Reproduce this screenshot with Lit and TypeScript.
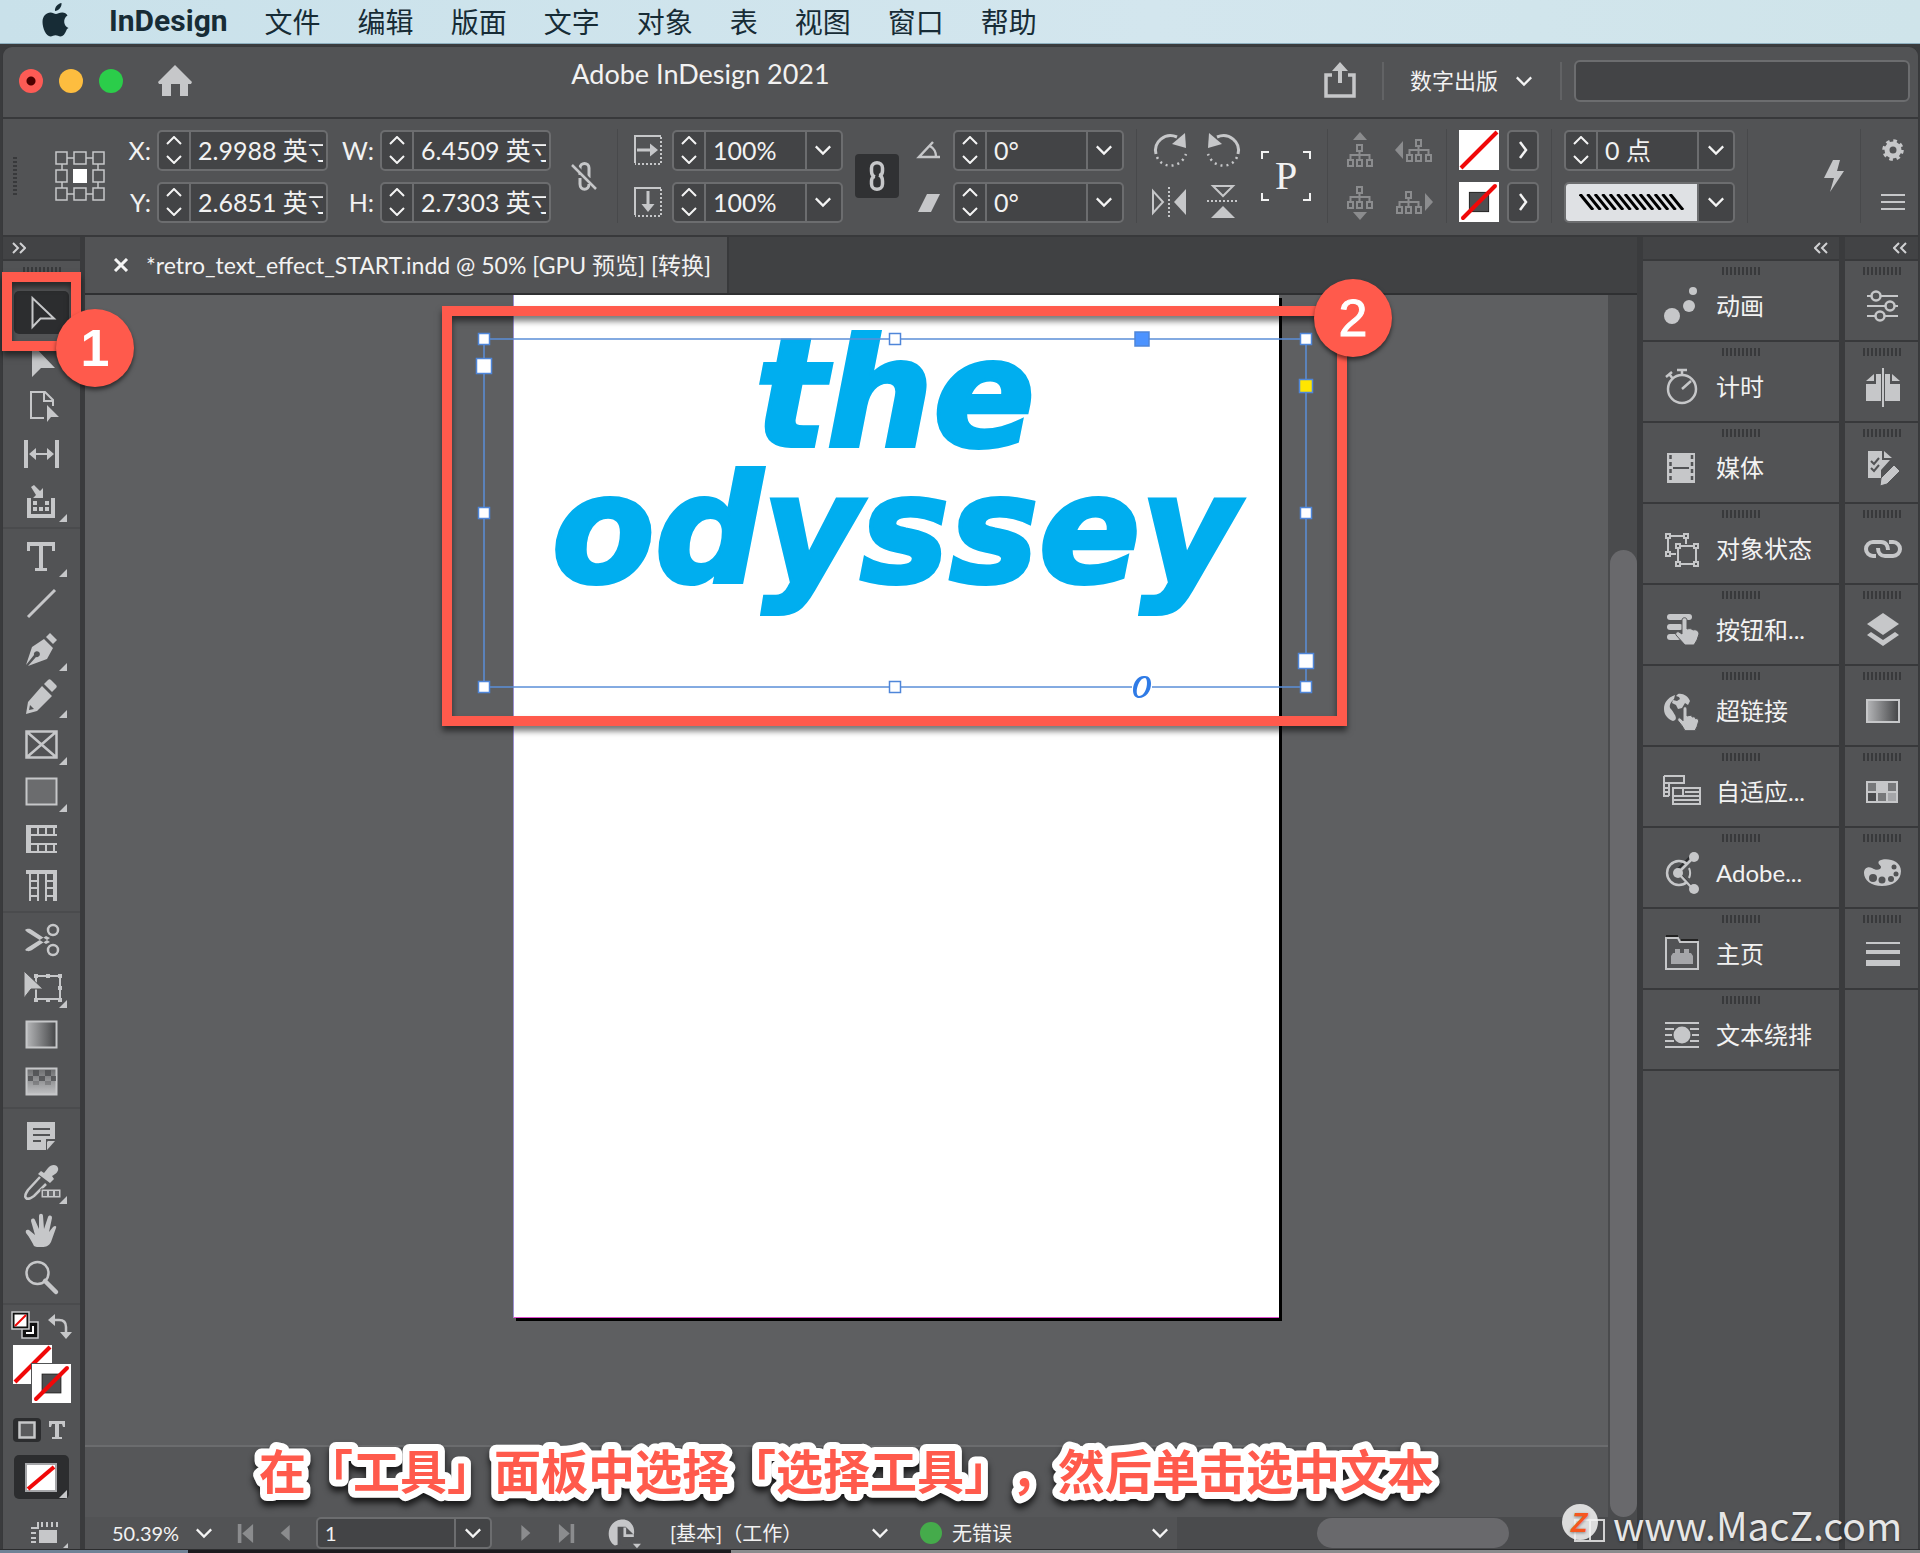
import { LitElement, html, svg, css, nothing } from "lit";
import { customElement } from "lit/decorators.js";
import { classMap } from "lit/directives/class-map.js";

const corner = svg`<path d="M38 41h8v-8z"/>`;

const none = (x: number, y: number, w: number) => svg`
  <rect x=${x} y=${y} width=${w} height=${w} fill="#fff"/>
  <path d="M${x + 2} ${y + w - 2}L${x + w - 2} ${y + 2}" stroke="#f00808" stroke-width="4"/>`;

const hollow = (x: number, y: number, w: number) => svg`
  <rect x=${x} y=${y} width=${w} height=${w} fill="#fff"/>
  <rect x=${x + w * 0.26} y=${y + w * 0.26} width=${w * 0.48} height=${w * 0.48} fill="#4e4f51" stroke="#222" stroke-width="1"/>
  <path d="M${x + 4} ${y + w - 4}L${x + w - 4} ${y + 4}" stroke="#f00808" stroke-width="4" stroke-linecap="round"/>`;

const tree = svg`<g fill="none" stroke="currentColor" stroke-width="2">
  <rect x="17" y="11" width="5" height="6"/><rect x="8" y="26" width="5" height="6"/>
  <rect x="17" y="26" width="5" height="6"/><rect x="27" y="26" width="5" height="6"/>
  <path d="M19.500 17v9M10.500 26v-5h19v5"/></g>`;

const hand = svg`<path d="M22 18c0-3 4-3 4 0v7l2-.500c2-.500 3 .500 3 1.500 2-.700 3.500.500 3.500 1.700 2-.500 3.500.500 3 3l-1.500 5-2 4H24l-3-5-4-5c-1-2 1-4 3-2l2 2z" stroke="#525355" stroke-width="1"/>`;

const icons: Record<string, unknown> = {
  select: svg`<path d="M11.500 5v29l8-8.500H33z" fill="none" stroke="currentColor" stroke-width="2"/>`,
  direct: svg`<path d="M11 4v33l9-9h14z"/>`,
  page: svg`<path d="M23 31H10V5h14l8 8v6M23 6v8h9" fill="none" stroke="currentColor" stroke-width="2"/><path d="M26 18v17l4-5h8z"/>`,
  gap: svg`<path d="M3 6h4v28H3zM34 6h4v28h-4z"/><path d="M8 20l7-6v5h11v-5l7 6-7 6v-5H15v5z"/>`,
  collect: svg`<path d="M6 17h4v16h20V17h4v20H6z"/><path d="M10 6l3-2 6 6 3-3v10H12l3-3z"/><path d="M12 20h4v4h-4zM24 20h4v4h-4zM12 26h4v4h-4zM18 26h4v4h-4zM24 26h4v4h-4z"/>${corner}`,
  type: svg`<path d="M6 6h28v9h-3v-5h-9v22h4v3H14v-3h4V10H9v5H6z"/>${corner}`,
  line: svg`<path d="M7 34L34 7" stroke="currentColor" stroke-width="3"/>`,
  pen: svg`<path d="M23 9l9 9-6 11-19 7 8-9a3 3 0 1 0-2-2l-8 10 6-18z"/><path d="M25 7l4-4 7 7-4 4z"/>${corner}`,
  pencil: svg`<path d="M21 9l10 10-15 15-11 3 2-12zM8 33l5-1-4-4z" fill-rule="evenodd"/><path d="M23 7l4-4c1-1 2-1 3 0l5 5c1 1 1 2 0 3l-4 4z"/>${corner}`,
  frame: svg`<path d="M5.500 7.500h30v26h-30zL35.500 33.500M35.500 7.500l-30 26" fill="none" stroke="currentColor" stroke-width="2.500"/>${corner}`,
  rect: svg`<rect x="5.500" y="7.500" width="30" height="26" fill="#6b6c6e" stroke="currentColor" stroke-width="2"/>${corner}`,
  rows: svg`<path d="M5 7h31v3H10v6h26v2H10v7h26v2H10v6h26v2H5z"/><path d="M16 9h2v8h-2zM24 9h2v8h-2zM32 9h2v8h-2zM16 26h2v8h-2zM24 26h2v8h-2zM32 26h2v8h-2z"/>`,
  cols: svg`<path d="M5 5h31v31h-4V9h-6v27h-2V9h-6v27h-2V9H10v27H8V9H5z"/><path d="M9 15h8v2H9zM9 22h8v2H9zM9 30h8v2H9zM25 15h8v2h-8zM25 22h8v2h-8zM25 30h8v2h-8z"/>`,
  cut: svg`<path d="M4 10c3-2 5-1 7 0l18 12-4 2L6 12zM4 30c3 2 5 1 7 0l18-12-4-2L6 28z"/><g fill="none" stroke="currentColor" stroke-width="2.500"><circle cx="32" cy="10" r="5"/><circle cx="32" cy="30" r="5"/></g>`,
  transform: svg`<path d="M15 9h24v23H15z" fill="none" stroke="currentColor" stroke-width="2"/><path d="M13 7h4v4h-4zM25 7h4v4h-4zM37 7h4v4h-4zM37 19h4v4h-4zM37 31h4v4h-4zM25 31h4v4h-4zM13 31h4v4h-4z"/><path d="M3 4v27l7-9h12z" stroke="#525355" stroke-width="1"/>${corner}`,
  gradient: svg`<rect x="5.500" y="7.500" width="30" height="26" fill="url(#gh)" stroke="currentColor" stroke-width="2"/>`,
  feather: svg`<rect x="5.500" y="7.500" width="30" height="26" fill="url(#gv)" stroke="currentColor" stroke-width="2"/><path d="M12 9h6v6h-6zM24 9h6v6h-6zM7 15h5v5H7zM18 15h6v5h-6zM30 15h5v5h-5z" fill="#4c4d50" opacity=".8"/><path d="M12 20h6v4h-6zM24 20h6v4h-6z" fill="#4c4d50" opacity=".35"/>`,
  note: svg`<path d="M6 6h28v17h-9v11H6z"/><path d="M27 25h7l-8 9v-8z"/><path d="M12 13h17M12 19h17M12 25h8" stroke="#525355" stroke-width="2"/>`,
  dropper: svg`<path d="M19 14L7 27c-2 3-4 6-2 8s5 0 8-2l12-12" fill="none" stroke="currentColor" stroke-width="2.500"/><path d="M17 11l3-3 3 2 4-5c3-4 9-4 10 0 1 3-2 6-6 8l2 3-4 4z"/><path d="M20 26h20v9H20z" stroke="#525355" stroke-width="1"/><path d="M22 28h4v5h-4zM28 28h4v5h-4zM34 28h4v5h-4z" fill="#66676a"/>${corner}`,
  hand: svg`<path d="M13 36c-2-4-4-8-8-13-1-3 1-4 3-3l6 5-4-14c0-3 3-3 4-1l4 9V6c0-3 4-3 4 0l1 13 4-12c1-2 4-2 4 1l-3 14 4-5c2-2 4-1 3 1l-5 14c-2 4-5 5-9 5s-7 0-8-1z"/>`,
  zoom: svg`<circle cx="16.500" cy="16" r="11" fill="none" stroke="currentColor" stroke-width="2.500"/><path d="M24 24l11 11" stroke="currentColor" stroke-width="4.500" stroke-linecap="round"/>`,
  anim: svg`<circle cx="11" cy="30" r="8"/><circle cx="28" cy="20" r="6"/><circle cx="32" cy="5" r="4"/>`,
  timing: svg`<g fill="none" stroke="currentColor" stroke-width="2.500"><circle cx="21" cy="22" r="14"/><path d="M21 22l9-8M16 3h10M21 3v5M5 10l6-5M9 8l3 4"/></g>`,
  media: svg`<path d="M6 5h28v30H6z"/><path d="M9.500 7v28M31 7v28" stroke="#525355" stroke-width="2.500" stroke-dasharray="4 3"/><path d="M12 20h16" stroke="#525355" stroke-width="2"/>`,
  states: svg`<g fill="none" stroke="currentColor" stroke-width="2"><path d="M5 5h4v4H5zM23 5h4v4h-4zM5 23h4v4H5zM9 7h14M7 9v14M25 9v6M9 25h6"/><path d="M15 15h4v4h-4zM33 15h4v4h-4zM15 33h4v4h-4zM33 33h4v4h-4zM19 17h14M17 19v14M35 19v14M19 35h14"/></g>`,
  buttons: svg`<rect x="6" y="4" width="25" height="6" rx="3"/><rect x="6" y="14" width="16" height="6" rx="3"/><rect x="6" y="24" width="14" height="6" rx="3"/><path d="M21 10c0-3 5-3 5 0v9c3-1 5 0 6 1 3-1 6 1 6 4l-2 6-3 5H24l-9-10c-1-2 1-4 3-3l3 2z" stroke="#525355"/>`,
  links: svg`<path d="M14 4C6 7 3 12 3 18c0 6 4 10 9 12 4-1 3-4 2-6-2-3-2-4-5-7-1-4 2-7 4-9zM17 3c5-1 10 2 12 7l-2 4-3-2-3 5-4 1-2-4-4-2 1-3 4 1 3-2-1-2-3-1z"/>${hand}`,
  adaptive: svg`<g fill="none" stroke="currentColor" stroke-width="2"><path d="M3 4h20v8M3 4v20h5M3 11h20M3 16h5M3 20h5M8 12v12"/><path d="M12 16h27v16H12zM12 24h27M12 28h27M22 16v8M24 20h14"/></g>`,
  share: svg`<path d="M16 17L31 2M16 18l15 16" stroke="#2a2b2d" stroke-width="2"/><g fill="none" stroke="currentColor" stroke-width="2.500"><path d="M26 11a12 12 0 1 0 0 18"/><path d="M28 15a12 12 0 0 1 0 10" stroke-width="2"/><path d="M17 20L32 5M17 20l15 16"/></g><circle cx="17" cy="20" r="5"/><circle cx="33" cy="4" r="5"/><circle cx="33" cy="36" r="5"/>`,
  home: svg`<path d="M5 4h12l2 4h18v27H5z" fill="none" stroke="currentColor" stroke-width="2"/><path d="M5 2h12M20 6h17" stroke="#222" stroke-width="2"/><path d="M10 22l2-3h2v-4h5v4h4v-4h5v4h2l2 3v8H10z" fill="#a5a6a9"/>`,
  wrap: svg`<path d="M4 7h34v2H4zM4 31h34v2H4zM4 13h9v2H4zM29 13h9v2h-9zM4 19h7v2H4zM31 19h7v2h-7zM4 25h9v2H4zM29 25h9v2h-9z"/><circle cx="21" cy="20" r="8.500"/>`,
  sliders: svg`<g fill="none" stroke="currentColor" stroke-width="2"><path d="M4 10h4M18 10h17M4 20h18M32 20h3M4 30h8M22 30h13"/><circle cx="13" cy="10" r="4.500" stroke-width="2.500"/><circle cx="27" cy="20" r="4.500" stroke-width="2.500"/><circle cx="17" cy="30" r="4.500" stroke-width="2.500"/></g>`,
  pages: svg`<path d="M3 17h10V7h5v27H3zM37 17H27V7h-5v27h15zM3 14l8-7v7zM37 14l-8-7v7z"/><path d="M20 1v39" stroke="currentColor" stroke-width="2"/>`,
  review: svg`<path d="M5 3h14v9h8l-9 10v8H5z"/><path d="M21 3l8 7h-8z"/><path d="M8 13l3 3 5-6M8 20l3 3 5-6" stroke="#525355" stroke-width="2" fill="none"/><path d="M31 17l6 6-13 13-7 2 1-8z" stroke="#525355"/>`,
  chain: svg`<g fill="none" stroke="currentColor" stroke-width="4"><path d="M13 27h-3a7 7 0 0 1 0-14h8c5 0 7 4 7 8"/><path d="M15 19c0 5 3 8 7 8h8a7 7 0 0 0 0-14h-4"/></g>`,
  layers: svg`<path d="M20 3l16 11-16 11L4 14z"/><path d="M8 22l12 8 12-8 4 3-16 11L4 25z"/>`,
  grad2: svg`<rect x="4" y="9" width="32" height="22" fill="url(#gh)" stroke="currentColor" stroke-width="2"/>`,
  swatches: svg`<path d="M3 9h32v22H3z"/><path d="M5 11h8v8H5zM25 11h8v8h-8zM15 21h8v8h-8z" fill="#77787a"/><path d="M5 21h8v8H5z" fill="#4a4b4d"/><path d="M25 21h8v8h-8z" fill="#a5a6a9"/>`,
  palette: svg`<path d="M16 8c5-4 22-2 22 10 0 9-8 15-19 15S1 27 1 20c0-5 4-7 8-5 4 3 9 2 9-1 0-2-4-3-2-6z"/><g fill="#525355"><circle cx="10" cy="25" r="4"/><circle cx="19" cy="27" r="3.500"/><circle cx="28" cy="26" r="3"/><circle cx="33" cy="21" r="2.500"/><circle cx="31" cy="14" r="2.500"/></g>`,
  stroke: svg`<path d="M3 8h34v2H3zM3 16h34v4H3zM3 26h34v6H3z"/>`,
  apple: svg`<path d="M31 28c-2 5-4 7.500-6.500 7.500-2 0-3-1.200-5-1.200s-3 1.200-5 1.200C10 35.500 6.500 27 6.500 21c0-6 4-9.500 8-9.500 2.200 0 4 1.500 5.500 1.500s3.500-1.700 6.500-1.500c2 .200 4 1 5 3-5 3-4 10.500 1 12.500zM25.500 2c.500 4-3 8-6.500 8-.500-4 3-7.500 6.500-8z"/>`,
  house: svg`<path d="M20 4l17 17-1 2h-3v12h-8V23h-9v12H7V23H4l-1-2z"/>`,
  upload: svg`<path d="M12 14H6v21h28V14h-6" fill="none" stroke="currentColor" stroke-width="3.500"/><path d="M20 1l8 9h-6v12h-4V10h-6z"/>`,
  ref: svg`<g fill="none" stroke="currentColor" stroke-width="1.500"><path d="M-4-4h11v12H-4zM14-4h12v12H14zM33-4h11v12H33zM-4 14h11v12H-4zM33 14h11v12H33zM-4 32h11v12H-4zM14 32h12v12H14zM33 32h11v12H33zM7 2h7M26 2h7M7 38h7M26 38h7M2 8v6M2 26v6M38 8v6M38 26v6"/></g><path d="M13 13h14v14H13z" fill="#fff"/>`,
  unlink: svg`<g fill="none" stroke="currentColor" stroke-width="3"><path d="M16 19v-7c0-6 9-6 9 0v10M16 22v6c0 7 9 7 9 0"/></g><path d="M10 8l24 24" stroke="#525355" stroke-width="3"/><path d="M8 9l24 24" stroke="currentColor" stroke-width="2.500"/>`,
  link: svg`<g fill="none" stroke="currentColor" stroke-width="3.500"><path d="M18 21c-3-1-3.500-3-3.500-6v-3c0-7 11-7 11 0v3c0 3-1 4-3 5"/><path d="M22 19c3 1 3.500 3 3.500 6v3c0 7-11 7-11 0v-3c0-3 1-4 3-5"/></g>`,
  scaleX: svg`<path d="M33 6H7v27" fill="none" stroke="currentColor" stroke-width="2"/><path d="M33 7v27H7" fill="none" stroke="currentColor" stroke-width="2" stroke-dasharray="2 2"/><path d="M9 18.500h13v-5l8 6.500-8 6.500v-5H9z"/>`,
  scaleY: svg`<path d="M33 6H7v27" fill="none" stroke="currentColor" stroke-width="2"/><path d="M33 7v27H7" fill="none" stroke="currentColor" stroke-width="2" stroke-dasharray="2 2"/><path d="M18.500 9h3v13h5L20 30l-6.500-8h5z"/>`,
  angle: svg`<path d="M24 12L10 27h21M21 16c5 3 6 6 6 11" fill="none" stroke="currentColor" stroke-width="2.500"/>`,
  shear: svg`<path d="M18 12h13l-9 18H9z"/>`,
  cw: svg`<path d="M5 24C2 12 14 2 26 7" fill="none" stroke="currentColor" stroke-width="3"/><path d="M34 3l1 15-14-4z"/><path d="M6 27c5 12 24 12 29-3" fill="none" stroke="currentColor" stroke-width="2.500" stroke-dasharray="2 4"/>`,
  ccw: svg`<path d="M35 24C38 12 26 2 14 7" fill="none" stroke="currentColor" stroke-width="3"/><path d="M6 3L5 18l14-4z"/><path d="M34 27C29 39 10 39 5 24" fill="none" stroke="currentColor" stroke-width="2.500" stroke-dasharray="2 4"/>`,
  flipH: svg`<path d="M35 7v26L23 20z"/><path d="M2 9v22l10-11z" fill="none" stroke="currentColor" stroke-width="2"/><path d="M18 5v31" stroke="currentColor" stroke-width="2" stroke-dasharray="2 2"/>`,
  flipV: svg`<path d="M8 36h24L20 24z"/><path d="M10 4h20L20 14z" fill="none" stroke="currentColor" stroke-width="2"/><path d="M4 19h32" stroke="currentColor" stroke-width="2" stroke-dasharray="2 2"/>`,
  treeUp: svg`<g transform="translate(0 4)">${tree}</g><path d="M13 10l7-8 7 8z"/>`,
  treeDown: svg`<g transform="translate(0 -6)">${tree}</g><path d="M13 30l7 8 7-8z"/>`,
  treeLeft: svg`<g transform="translate(5 -1)">${tree}</g><path d="M9 11L1 20l8 9z"/>`,
  treeRight: svg`<g transform="translate(-5 -1)">${tree}</g><path d="M31 11l8 9-8 9z"/>`,
  fillNone: svg`${none(0, 0, 40)}`,
  strokeNone: svg`${hollow(0, 0, 40)}`,
  bolt: svg`<path d="M20 4h7l-3 11h7L17 36l4-14h-10z"/>`,
  gear: svg`<circle cx="20" cy="20" r="6" fill="none" stroke="currentColor" stroke-width="5"/><circle cx="20" cy="20" r="9" fill="none" stroke="currentColor" stroke-width="3.500" stroke-dasharray="3.500 3.570"/>`,
  menu: svg`<path d="M8 12h24v2H8zM8 19h24v2H8zM8 26h24v2H8z"/>`,
  down: svg`<path d="M12 16l8 8 8-8" fill="none" stroke="currentColor" stroke-width="2.500"/>`,
  right: svg`<path d="M17 12l6 8-6 8" fill="none" stroke="currentColor" stroke-width="2.500"/>`,
  first: svg`<path d="M12 10h4v21h-4zM29 10v21l-12-10.500z"/>`,
  prev: svg`<path d="M23 11v18l-10-9z"/>`,
  next: svg`<path d="M16 11v18l10-9z"/>`,
  last: svg`<path d="M24 10h4v21h-4zM11 10v21l12-10.500z"/>`,
  pageview: svg`<path d="M11 34C0 27 2 7 18 5c10-1 16 8 14 17l-9-9H14v20z"/><path d="M17 33V15h6v9h8c0 5-4 9-8 10z" fill="#525355"/><path d="M22 14v9h10" fill="none" stroke="currentColor" stroke-width="3"/><path d="M31 32h9l-4.500 5z"/>`,
  defaults: svg`<path d="M19 19h16v16H19z" fill="#111" stroke="#c6c7c9" stroke-width="1.500"/><path d="M23 30h7v-7" fill="none" stroke="#fff" stroke-width="2"/><path d="M9 9h17v17H9z" fill="#111" stroke="#c6c7c9" stroke-width="1.500"/><path d="M11.500 11.500h12v12h-12z" fill="#fff"/><path d="M12 23l11-11" stroke="#f00808" stroke-width="2"/>`,
  swap: svg`<path d="M12 17h6q7 0 7 7v7" fill="none" stroke="currentColor" stroke-width="2.500"/><path d="M14 11v12l-7-6zM19 29h12l-6 7z"/>`,
  box: svg`<rect x="12.500" y="12.500" width="15" height="15" fill="#5a5b5d" stroke="currentColor" stroke-width="2.500"/>`,
  textT: svg`<path d="M12 11h16v6h-2l-1-3h-3v13h3v2h-10v-2h3V14h-3l-1 3h-2z"/>`,
  applyNone: svg`<rect x="5" y="7" width="30" height="27" fill="#fff" stroke="#a5a6a9" stroke-width="2"/><path d="M7 32L33 10" stroke="#f00808" stroke-width="4"/>${corner}`,
  screen: svg`<path d="M17 17h18v13H17z"/><path d="M16 9v6H9M20 9v5M25 9v5M30 9v5M35 9v5M9 20h5M9 25h5M9 29h5" fill="none" stroke="currentColor" stroke-width="2"/><path d="M41 35h5v-5z"/>`,
};

const icon = (name: string, cls = "") => html`<svg class="icon ${cls}" viewBox="0 0 40 40" aria-hidden="true">${icons[name]}</svg>`;

const menus = ["文件", "编辑", "版面", "文字", "对象", "表", "视图", "窗口", "帮助"];

const toolGroups = [
  [["select", "选择工具"], ["direct", "直接选择工具"], ["page", "页面工具"], ["gap", "间隙工具"], ["collect", "内容收集器工具"]],
  [["type", "文字工具"], ["line", "直线工具"], ["pen", "钢笔工具"], ["pencil", "铅笔工具"], ["frame", "矩形框架工具"], ["rect", "矩形工具"], ["rows", "水平网格工具"], ["cols", "垂直网格工具"]],
  [["cut", "剪刀工具"], ["transform", "自由变换工具"], ["gradient", "渐变色板工具"], ["feather", "渐变羽化工具"]],
  [["note", "附注工具"], ["dropper", "颜色主题工具"], ["hand", "抓手工具"], ["zoom", "缩放显示工具"]],
];

const panels = [
  ["anim", "动画"], ["timing", "计时"], ["media", "媒体"], ["states", "对象状态"], ["buttons", "按钮和..."],
  ["links", "超链接"], ["adaptive", "自适应..."], ["share", "Adobe..."], ["home", "主页"], ["wrap", "文本绕排"],
];

const railPanels = [
  ["sliders", "属性"], ["pages", "页面"], ["review", "审阅"], ["chain", "链接"], ["layers", "图层"],
  ["grad2", "渐变"], ["swatches", "色板"], ["palette", "颜色"], ["stroke", "描边"],
];

const handles: [number, number, number, string][] = [
  [10, 10, 11, "#fff"], [421, 10, 11, "#fff"], [832, 10, 11, "#fff"], [10, 184, 11, "#fff"], [832, 184, 11, "#fff"],
  [10, 358, 11, "#fff"], [421, 358, 11, "#fff"], [832, 358, 11, "#fff"],
  [10, 37, 15, "#fff"], [832, 332, 15, "#fff"], [668, 10, 14, "#4c93ff"], [832, 57, 13, "#ffe600"],
];

@customElement("app-root")
export class AppRoot extends LitElement {
  static styles = css`
    :host { display: flex; flex-direction: column; min-height: 100vh; position: relative; overflow: hidden; background: #3a3b3d; color: #f2f2f2; font: 25px/32px Lato, "Noto Sans CJK SC", sans-serif; }
    *, *::before, *::after { box-sizing: border-box; }
    button, input, select { font: inherit; color: inherit; background: none; border: 0; padding: 0; margin: 0; border-radius: 0; min-width: 0; appearance: none; }
    button { display: grid; place-items: center; place-content: center; }
    .icon { display: block; width: 40px; height: 40px; fill: currentColor; color: #c6c7c9; overflow: visible; flex: none; }
    .white { color: #f4f4f4; }
    .dim { color: #8b8c8e; }
    .defs { position: absolute; width: 0; height: 0; }

    .menubar { display: flex; align-items: center; gap: 37px; height: 44px; padding: 0 36px 2px; background: linear-gradient(90deg, #c9e1ea, #d3e6ee 60%, #cfe4ea); border-bottom: 1px solid #8fb0c0; color: #172c36; font: 28px/40px "Noto Sans CJK SC", sans-serif; }
    .menubar a { color: inherit; text-decoration: none; white-space: nowrap; }
    .menubar .brand { font: bold 30px/40px Roboto, sans-serif; }
    .menubar .icon { color: #172c36; margin-right: -4px; }

    .window { flex: 1; display: flex; flex-direction: column; margin: 2px 1px 0 2px; background: #525355; border: 1px solid #38393b; border-bottom: 0; border-radius: 10px 10px 0 0; }
    .titlebar { display: flex; align-items: center; height: 72px; padding: 0 8px 2px 16px; border-bottom: 2px solid #38393b; }
    .lights { display: flex; gap: 16px; }
    .light { width: 24px; height: 24px; border-radius: 50%; }
    .red { background: radial-gradient(circle, #4d0000 4px, #fd5b55 5px); }
    .amber { background: #fdbd3f; }
    .green { background: #2bcd4a; }
    .house { margin: 0 32px; }
    .appname { flex: 1; text-align: center; font-size: 27px; line-height: 32px; padding-bottom: 14px; padding-right: 146px; font-weight: 400; margin: 0; }
    .titletools { display: flex; align-items: center; gap: 12px; height: 44px; }
    .vline { width: 2px; height: 38px; background: #626365; }
    .pick { display: inline-grid; grid-template-columns: 1fr 36px; align-items: center; flex: none; }
    .pick select { grid-area: 1 / 1 / 2 / 3; width: 100%; outline-offset: 2px; }
    .pick .icon { grid-area: 1 / 2; pointer-events: none; }
    .upload { margin-right: 10px; }
    .workspace { width: 132px; margin: 0 6px 0 14px; font-size: 22px; }
    .search { width: 336px; height: 42px; background: #434446; border: 2px solid #6c6d6f; border-radius: 6px; padding: 0 10px; }

    .controls { display: flex; align-items: center; gap: 12px; height: 118px; padding: 0 13px 2px 10px; border-bottom: 2px solid #38393b; }
    .grip-v { width: 4px; height: 38px; margin-right: 26px; background: repeating-linear-gradient(#38393b 0 2px, transparent 2px 4px); }
    .refpoint { width: 50px; flex: none; }
    .pair { display: grid; row-gap: 11px; column-gap: 6px; align-items: center; flex: none; }
    .labelled { grid-template-columns: 34px 171px; }
    .labelled label { text-align: right; }
    .iconed { grid-template-columns: 36px 171px; }
    .iconed .icon { margin-left: -2px; }
    .quad { grid-template-columns: 44px 44px; column-gap: 8px; }
    .trees { grid-template-columns: 40px 40px; column-gap: 14px; }
    .pair > button { height: 41px; }
    .swatch { grid-template-columns: 40px 32px; column-gap: 8px; }
    .single { grid-template-columns: 171px; }
    .field { display: flex; height: 41px; background: #434446; border: 2px solid #6c6d6f; border-radius: 5px; overflow: hidden; }
    .field input { flex: 1; width: 0; padding: 0 3px 0 7px; }
    .steps { display: grid; width: 32px; border-right: 2px solid #6c6d6f; flex: none; }
    .steps button { overflow: hidden; }
    .steps svg { display: block; width: 16px; height: 9px; fill: none; stroke: #f4f4f4; stroke-width: 2; }
    .drop { width: 36px; border-left: 2px solid #6c6d6f; flex: none; }
    .field .icon, .pick .icon { color: #f4f4f4; width: 36px; height: 36px; }
    .rule { width: 1px; height: 94px; background: #48494b; flex: none; }
    .lock { width: 44px; height: 44px; border-radius: 4px; background: #303133; flex: none; }
    .unlink { width: 42px; flex: none; }
    .para { display: grid; place-items: center; width: 50px; height: 50px; margin: 0 4px; flex: none; font: 40px/46px "Liberation Serif", serif;
      background: linear-gradient(#f2f2f2 0 0) 0 0/8px 2px, linear-gradient(#f2f2f2 0 0) 0 0/2px 8px, linear-gradient(#f2f2f2 0 0) 100% 0/8px 2px, linear-gradient(#f2f2f2 0 0) 100% 0/2px 8px, linear-gradient(#f2f2f2 0 0) 0 100%/8px 2px, linear-gradient(#f2f2f2 0 0) 0 100%/2px 8px, linear-gradient(#f2f2f2 0 0) 100% 100%/8px 2px, linear-gradient(#f2f2f2 0 0) 100% 100%/2px 8px; background-repeat: no-repeat; }
    .arrow { width: 32px; background: #434446; border: 2px solid #6c6d6f; border-radius: 5px; }
    .hatch { flex: 1; display: grid; place-items: center; background: #dfe1e4; }
    .hatch svg { width: 106px; height: 16px; stroke: #000; stroke-width: 3; }
    .spacer { flex: 1; }
    .bolt { width: 30px; }
    .end { display: grid; gap: 12px; width: 40px; margin-right: -8px; justify-items: center; }

    .body { flex: 1; display: flex; background: #3a3b3d; }
    .side { display: flex; flex-direction: column; background: #525355; }
    .collapse { height: 24px; background: #424345; border-bottom: 2px solid #38393b; width: 100%; flex: none; }
    .collapse svg { width: 14px; height: 12px; fill: none; stroke: #d0d1d3; stroke-width: 2; }
    .tools { width: 77px; align-items: center; margin-right: 5px; flex: none; }
    .tools .collapse { justify-content: start; padding-left: 9px; }
    .grip { width: 38px; height: 8px; background: repeating-linear-gradient(90deg, #38393b 0 2px, transparent 2px 4px); }
    .tools .grip { margin: 6px 0 16px; height: 6px; }
    .group { display: grid; width: 100%; justify-items: center; padding-bottom: 3px; border-bottom: 2px solid #4a4b4d; margin-bottom: 3px; }
    .tool { width: 55px; height: 43px; margin: 2px 0; border-radius: 5px; }
    .tool .icon { margin-left: -1px; }
    .active { background: #2c2d2f; }
    .row { display: flex; justify-content: space-between; width: 68px; }
    .row button { width: 30px; height: 30px; }
    .proxies { width: 60px; height: 60px; margin: 6px 0 14px; display: block; }
    .modes { width: 58px; margin-bottom: 11px; }
    .row .small { width: 28px; height: 24px; border-radius: 4px; }
    .none { height: 44px; }
    .screen { width: 55px; height: 20px; margin-top: 22px; }

    .main { flex: 1; display: flex; flex-direction: column; min-width: 0; background: #5e5f61; }
    .tabs { height: 58px; background: #404143; border-bottom: 2px solid #2f3032; display: flex; }
    .tab { display: flex; align-items: center; gap: 15px; padding: 0 16px 0 26px; background: #525355; border-right: 2px solid #38393b; font-size: 23px; white-space: nowrap; }
    .close svg { width: 20px; height: 14px; stroke: #f4f4f4; stroke-width: 3; }
    .view { flex: 1; display: flex; min-height: 1120px; }
    .pasteboard { flex: 1; position: relative; min-width: 0; display: flex; flex-direction: column; justify-content: flex-end; }
    .under { height: 72px; background: #565759; border-top: 2px solid #6b6c6e; }
    .vtrack { width: 29px; background: #4a4b4d; padding: 255px 0 0 2px; display: flex; flex: none; }
    .vthumb { flex: 1; border-radius: 14px; background: #69696c; }
    .sheet { position: absolute; left: 428px; top: 0; width: 766px; height: 1023px; background: #fff; box-shadow: 3px 3px 0 #000; border-left: 1px solid #9a8fd0; border-bottom: 1px solid #e04bd0; }
    .textframe { position: absolute; left: 389px; top: 34px; width: 842px; }
    .textframe svg { display: block; width: 842px; height: 368px; overflow: visible; position: relative; }
    .headline { position: absolute; left: 10px; top: -3px; width: 822px; margin: 0; text-align: center; color: #00aeef; font: italic bold 150px/136px "DejaVu Sans", sans-serif; -webkit-text-stroke: 4px #00aeef; }
    .mark { position: absolute; border: 10px solid #ff5a4c; box-shadow: 0 5px 6px #0008, inset 0 5px 6px #0008; pointer-events: none; z-index: 2; }
    .badge { position: absolute; display: grid; place-items: center; width: 78px; height: 78px; border-radius: 50%; background: #ff5a4c; box-shadow: 0 3px 4px #0008; color: #fff; font: bold 52px/60px "Liberation Sans", sans-serif; z-index: 3; }
    .mark2 { left: 357px; top: 11px; width: 905px; height: 420px; }
    .badge2 { left: 1229px; top: -16px; font-weight: 400; -webkit-text-stroke: 1px #fff; }
    .mark1 { left: 2px; top: 272px; width: 79px; height: 79px; }
    .badge1 { left: 56px; top: 309px; }
    .caption { display: block; width: 100%; height: 70px; overflow: visible; position: relative; z-index: 2; filter: drop-shadow(0 5px 3px #000b); }
    .caption text { fill: #ff5a4c; stroke: #fff; stroke-width: 14px; stroke-linejoin: round; paint-order: stroke; text-anchor: middle; font: bold 47px/56px "Noto Sans CJK SC", sans-serif; text-spacing-trim: space-all; }

    .status { display: flex; align-items: center; height: 32px; background: #4a4b4d; font-size: 20px; }
    .statusbar { display: flex; align-items: center; background: #525355; height: 32px; width: 1092px; padding-left: 27px; flex: none; }
    .status .icon { width: 36px; height: 36px; }
    .zoomsel { width: 110px; margin-right: 2px; }
    .nav { width: 42px; height: 32px; flex: none; }
    .pageno { width: 176px; height: 32px; margin: 0 12px 0 8px; flex: none; }
    .pageview { width: 46px; height: 32px; margin: 0 24px 0 12px; flex: none; }
    .profile { width: 228px; margin-right: 22px; }
    .dot { width: 22px; height: 22px; border-radius: 50%; background: #45ab4b; margin-right: 10px; flex: none; }
    .errors { width: 226px; }
    .htrack { flex: 1; display: flex; padding-left: 140px; }
    .hthumb { width: 192px; height: 30px; border-radius: 15px; background: #69696c; }

    .dock { width: 196px; margin-left: 6px; flex: none; }
    .rail { width: 73px; margin-left: 6px; flex: none; }
    .dock .collapse, .rail .collapse { justify-content: end; padding-right: 11px; }
    .cell { display: flex; flex-direction: column; align-items: center; justify-content: flex-start; gap: 11px; height: 81px; width: 100%; padding-top: 6px; border-bottom: 2px solid #38393b; flex: none; }
    .cellrow { display: flex; align-items: center; gap: 15px; width: 100%; padding-left: 18px; font-size: 24px; white-space: nowrap; }

    .footer { height: 4px; border-top: 1px solid #2c2d2f; background: linear-gradient(90deg, #6f8296 0 188px, #1c1a1e 188px 731px, #8b8b8d 731px); }
    .watermark { position: absolute; right: 18px; bottom: 7px; display: flex; align-items: center; gap: 3px; color: #e6e6e6; font: 39px/44px "Noto Sans CJK SC", sans-serif; text-shadow: 0 1px 3px #0006; z-index: 4; }
    .watermark svg { width: 48px; height: 42px; overflow: visible; }
  `;

  private field(id: string, value: string, label: string, drop = false) {
    return html`<div class="field">
      <div class="steps">
        <button aria-label=${label + " 增加"}><svg viewBox="0 0 16 9"><path d="M1 8l7-7 7 7"/></svg></button>
        <button aria-label=${label + " 减少"}><svg viewBox="0 0 16 9"><path d="M1 1l7 7 7-7"/></svg></button>
      </div>
      <input id=${id} .value=${value} aria-label=${label} />
      ${drop ? html`<button class="drop" aria-label=${label + " 选项"}>${icon("down")}</button>` : nothing}
    </div>`;
  }

  private collapse(left: boolean) {
    return html`<button class="collapse" aria-label="折叠面板"><svg viewBox="0 0 14 12"><path d=${left ? "M6 1L1 6l5 5M13 1L8 6l5 5" : "M1 1l5 5-5 5M8 1l5 5-5 5"}/></svg></button>`;
  }

  private pick(cls: string, label: string, value: string) {
    return html`<span class="pick ${cls}"><select aria-label=${label}><option>${value}</option></select>${icon("down")}</span>`;
  }

  render() {
    return html`
      <nav class="menubar">${icon("apple")}<a class="brand" href="#">InDesign</a>${menus.map((m) => html`<a href="#">${m}</a>`)}</nav>
      <div class="window">
        <header class="titlebar">
          <div class="lights">
            <button class="light red" aria-label="关闭"></button><button class="light amber" aria-label="最小化"></button><button class="light green" aria-label="缩放"></button>
          </div>
          <button class="house" aria-label="主页">${icon("house")}</button>
          <h1 class="appname">Adobe InDesign 2021</h1>
          <div class="titletools">
            <button class="upload" aria-label="共享">${icon("upload")}</button>
            <span class="vline"></span>
            ${this.pick("workspace", "工作区", "数字出版")}
            <span class="vline"></span>
            <input class="search" type="search" aria-label="搜索" />
          </div>
        </header>

        <section class="controls">
          <span class="grip-v"></span>
          <button class="refpoint" aria-label="参考点">${icon("ref")}</button>
          <div class="pair labelled">
            <label for="x">X:</label>${this.field("x", "2.9988 英寸", "X")}
            <label for="y">Y:</label>${this.field("y", "2.6851 英寸", "Y")}
          </div>
          <div class="pair labelled">
            <label for="w">W:</label>${this.field("w", "6.4509 英寸", "W")}
            <label for="h">H:</label>${this.field("h", "2.7303 英寸", "H")}
          </div>
          <button class="unlink" aria-label="约束宽度和高度比例">${icon("unlink")}</button>
          <span class="rule"></span>
          <div class="pair iconed">
            ${icon("scaleX")}${this.field("sx", "100%", "X 缩放", true)}
            ${icon("scaleY")}${this.field("sy", "100%", "Y 缩放", true)}
          </div>
          <button class="lock" aria-label="约束缩放比例">${icon("link")}</button>
          <div class="pair iconed">
            ${icon("angle")}${this.field("rot", "0°", "旋转角度", true)}
            ${icon("shear")}${this.field("shr", "0°", "切变角度", true)}
          </div>
          <span class="rule"></span>
          <div class="pair quad">
            <button aria-label="顺时针旋转">${icon("cw")}</button><button aria-label="逆时针旋转">${icon("ccw")}</button>
            <button aria-label="水平翻转">${icon("flipH")}</button><button aria-label="垂直翻转">${icon("flipV")}</button>
          </div>
          <span class="para">P</span>
          <span class="rule"></span>
          <div class="pair trees">
            <button aria-label="选择容器">${icon("treeUp", "dim")}</button><button aria-label="上一个对象">${icon("treeLeft", "dim")}</button>
            <button aria-label="选择内容">${icon("treeDown", "dim")}</button><button aria-label="下一个对象">${icon("treeRight", "dim")}</button>
          </div>
          <span class="rule"></span>
          <div class="pair swatch">
            <button aria-label="填色">${icon("fillNone")}</button><button class="arrow" aria-label="填色选项">${icon("right", "white")}</button>
            <button aria-label="描边">${icon("strokeNone")}</button><button class="arrow" aria-label="描边选项">${icon("right", "white")}</button>
          </div>
          <span class="rule"></span>
          <div class="pair single">
            ${this.field("sw", "0 点", "描边粗细", true)}
            <div class="field">
              <span class="hatch"><svg viewBox="0 0 106 16">${Array.from({ length: 13 }, (_, i) => svg`<path d="M${i * 7.500 + 1} 0l13 16"/>`)}</svg></span>
              <button class="drop" aria-label="描边类型">${icon("down")}</button>
            </div>
          </div>
          <span class="rule"></span>
          <span class="spacer"></span>
          <button class="bolt" aria-label="快速应用">${icon("bolt")}</button>
          <span class="rule"></span>
          <div class="end"><button aria-label="设置">${icon("gear")}</button><button aria-label="面板菜单">${icon("menu")}</button></div>
        </section>

        <div class="body">
          <aside class="side tools">
            ${this.collapse(false)}
            <span class="grip"></span>
            ${toolGroups.map((g) => html`<div class="group">${g.map(([n, l]) => html`<button class=${classMap({ tool: true, active: n === "select" })} aria-label=${l}>${icon(n)}</button>`)}</div>`)}
            <div class="row"><button aria-label="默认填色和描边">${icon("defaults")}</button><button aria-label="互换填色和描边">${icon("swap")}</button></div>
            <svg class="proxies" viewBox="0 0 60 60">${none(1, 1, 39)}<path d="M19 19h41v41H19z" fill="#525355"/>${hollow(20, 20, 39)}</svg>
            <div class="row modes"><button class="small active" aria-label="格式针对容器">${icon("box")}</button><button class="small" aria-label="格式针对文本">${icon("textT")}</button></div>
            <button class="tool none active" aria-label="应用无">${icon("applyNone")}</button>
            <button class="screen" aria-label="屏幕模式">${icon("screen")}</button>
          </aside>

          <main class="main">
            <div class="tabs">
              <div class="tab"><button class="close" aria-label="关闭文档"><svg viewBox="0 0 20 14"><path d="M4 1l12 12M16 1L4 13"/></svg></button><span>*retro_text_effect_START.indd @ 50% [GPU 预览] [转换]</span></div>
            </div>
            <div class="view">
              <div class="pasteboard">
                <div class="sheet"></div>
                <div class="textframe">
                  <h2 class="headline">the<br />odyssey</h2>
                  <svg viewBox="0 0 842 368">
                    <rect x="10" y="10" width="822" height="348" fill="none" stroke="#5b8fd8" stroke-width="1.500"/>
                    ${handles.map(([x, y, s, f]) => svg`<rect x=${x - s / 2} y=${y - s / 2} width=${s} height=${s} fill=${f} stroke="#4f86d9" stroke-width="1.500"/>`)}
                    <rect x="658" y="354" width="20" height="8" fill="#fff"/>
                    <path d="M671 347c-6-1-12 5-12 14 0 6 3 8 6 8 7 0 12-7 12-14 0-5-2-8-6-8zm0 2c4 1 2 18-6 18-5-1-1-18 6-18z" fill="#2f7be6" fill-rule="evenodd"/>
                  </svg>
                </div>
                <div class="mark mark2"></div>
                <div class="badge badge2">2</div>
                <div class="under"><svg class="caption"><text x="50%" y="42">在「工具」面板中选择「选择工具」，然后单击选中文本</text></svg></div>
              </div>
              <div class="vtrack"><div class="vthumb"></div></div>
            </div>
            <footer class="status">
              <div class="statusbar">
                ${this.pick("zoomsel", "缩放级别", "50.39%")}
                <button class="nav" aria-label="首页">${icon("first", "dim")}</button>
                <button class="nav" aria-label="上一页">${icon("prev", "dim")}</button>
                <div class="field pageno"><input aria-label="页码" .value=${"1"} /><button class="drop" aria-label="选择页面">${icon("down")}</button></div>
                <button class="nav" aria-label="下一页">${icon("next", "dim")}</button>
                <button class="nav" aria-label="末页">${icon("last", "dim")}</button>
                <button class="pageview" aria-label="打开">${icon("pageview")}</button>
                ${this.pick("profile", "印前检查配置文件", "[基本]（工作）")}
                <span class="dot"></span>
                ${this.pick("errors", "印前检查", "无错误")}
              </div>
              <div class="htrack"><div class="hthumb"></div></div>
            </footer>
          </main>

          <aside class="side dock">
            ${this.collapse(true)}
            ${panels.map(([n, l]) => html`<button class="cell"><span class="grip"></span><span class="cellrow">${icon(n)}<span>${l}</span></span></button>`)}
          </aside>
          <aside class="side rail">
            ${this.collapse(true)}
            ${railPanels.map(([n, l]) => html`<button class="cell" aria-label=${l}><span class="grip"></span><span class="cellrow">${icon(n)}</span></button>`)}
          </aside>
        </div>
      </div>
      <div class="footer"></div>
      <svg class="defs" aria-hidden="true">
        <linearGradient id="gh"><stop offset="0" stop-color="#b5b6b8"/><stop offset="1" stop-color="#434446"/></linearGradient>
        <linearGradient id="gv" x2="0" y2="1"><stop offset="0" stop-color="#6b6c6e"/><stop offset="1" stop-color="#c0c1c3"/></linearGradient>
      </svg>
      <div class="mark mark1"></div>
      <div class="badge badge1">1</div>
      <div class="watermark">
        <svg viewBox="0 0 48 42"><circle cx="18" cy="19" r="18" fill="#dcdcdc"/><path d="M13 17h15v21H13zM28 17h14v21H28" fill="none" stroke="#f4f4f4" stroke-width="2" opacity=".8"/><text x="9" y="29" font-family="Liberation Sans" font-size="27" font-weight="bold" font-style="italic" fill="#f6571f">Z</text></svg>
        <span>www.MacZ.com</span>
      </div>
    `;
  }
}
